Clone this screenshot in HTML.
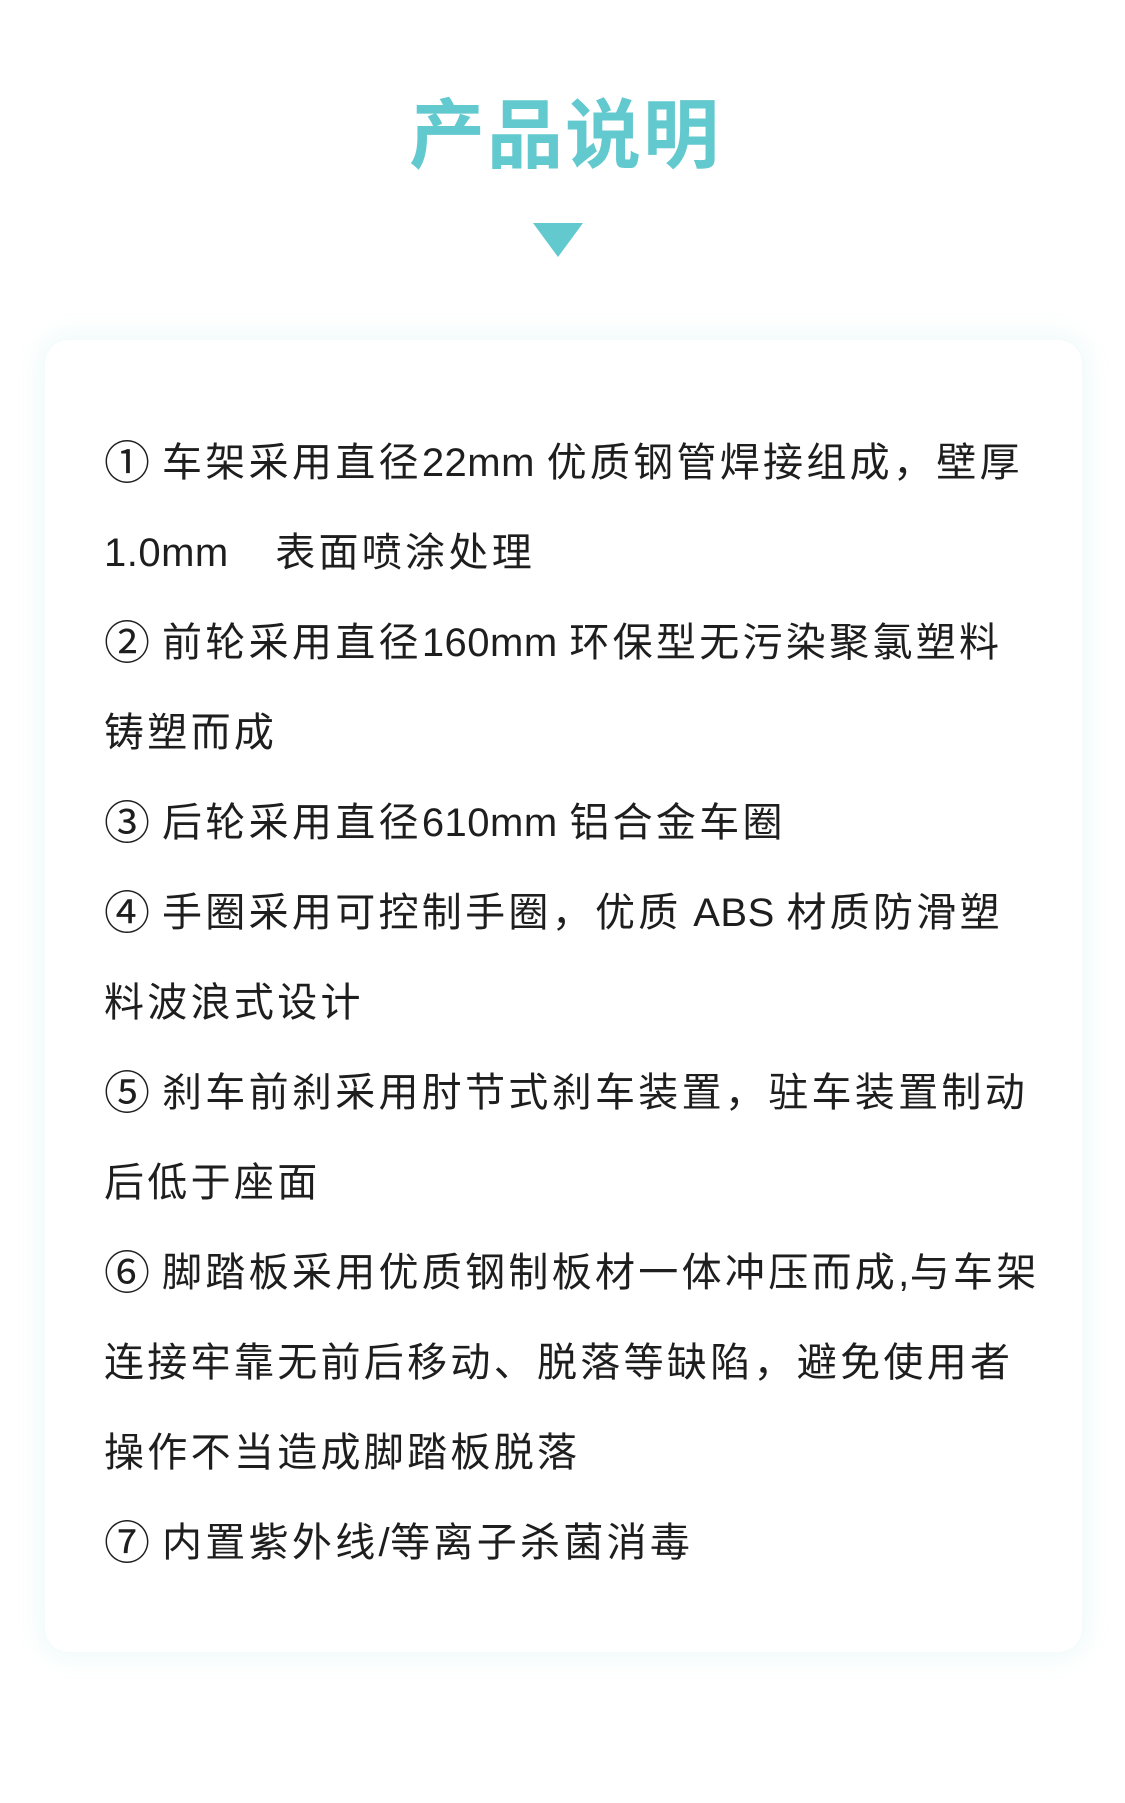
<!DOCTYPE html>
<html><head><meta charset="utf-8"><style>
html,body{margin:0;padding:0;background:#fff;}
body{width:1125px;height:1803px;position:relative;overflow:hidden;font-family:"Liberation Sans","Noto Sans CJK SC",sans-serif;}
.title{position:absolute;left:0;width:1130px;top:92px;text-align:center;font-size:76px;font-weight:bold;color:#62c9cf;line-height:90px;letter-spacing:2px;}
.tri{position:absolute;left:533px;top:223px;width:0;height:0;border-left:25px solid transparent;border-right:25px solid transparent;border-top:34px solid #62c9cf;}
.card{position:absolute;left:45px;top:340px;width:1037px;height:1312px;background:#fff;border-radius:24px;box-shadow:0 0 24px 6px rgba(98,201,207,0.10);}
.l{position:absolute;left:104px;height:90px;line-height:90px;font-size:40px;color:#1e1e1e;white-space:nowrap;letter-spacing:3.3px;}
.n{font-size:46px;letter-spacing:0;margin-right:12px;display:inline-block;line-height:40px;vertical-align:-3px;}
.e{letter-spacing:0.5px;}
</style></head><body>
<div class="title">产品说明</div>
<div class="tri"></div>
<div class="card"></div>
<div class="l" style="top:418px"><span class="n">①</span>车架采用直径<span class="e">22mm </span>优质钢管焊接组成，壁厚</div>
<div class="l" style="top:508px"><span class="e">1.0mm&nbsp;&nbsp;&nbsp; </span>表面喷涂处理</div>
<div class="l" style="top:598px"><span class="n">②</span>前轮采用直径<span class="e">160mm </span>环保型无污染聚氯塑料</div>
<div class="l" style="top:688px">铸塑而成</div>
<div class="l" style="top:778px"><span class="n">③</span>后轮采用直径<span class="e">610mm </span>铝合金车圈</div>
<div class="l" style="top:868px"><span class="n">④</span>手圈采用可控制手圈，优质<span class="e"> ABS </span>材质防滑塑</div>
<div class="l" style="top:958px">料波浪式设计</div>
<div class="l" style="top:1048px"><span class="n">⑤</span>刹车前刹采用肘节式刹车装置，驻车装置制动</div>
<div class="l" style="top:1138px">后低于座面</div>
<div class="l" style="top:1228px"><span class="n">⑥</span>脚踏板采用优质钢制板材一体冲压而成<span class="e">,</span>与车架</div>
<div class="l" style="top:1318px">连接牢靠无前后移动、脱落等缺陷，避免使用者</div>
<div class="l" style="top:1408px">操作不当造成脚踏板脱落</div>
<div class="l" style="top:1498px"><span class="n">⑦</span>内置紫外线<span class="e">/</span>等离子杀菌消毒</div>
</body></html>
